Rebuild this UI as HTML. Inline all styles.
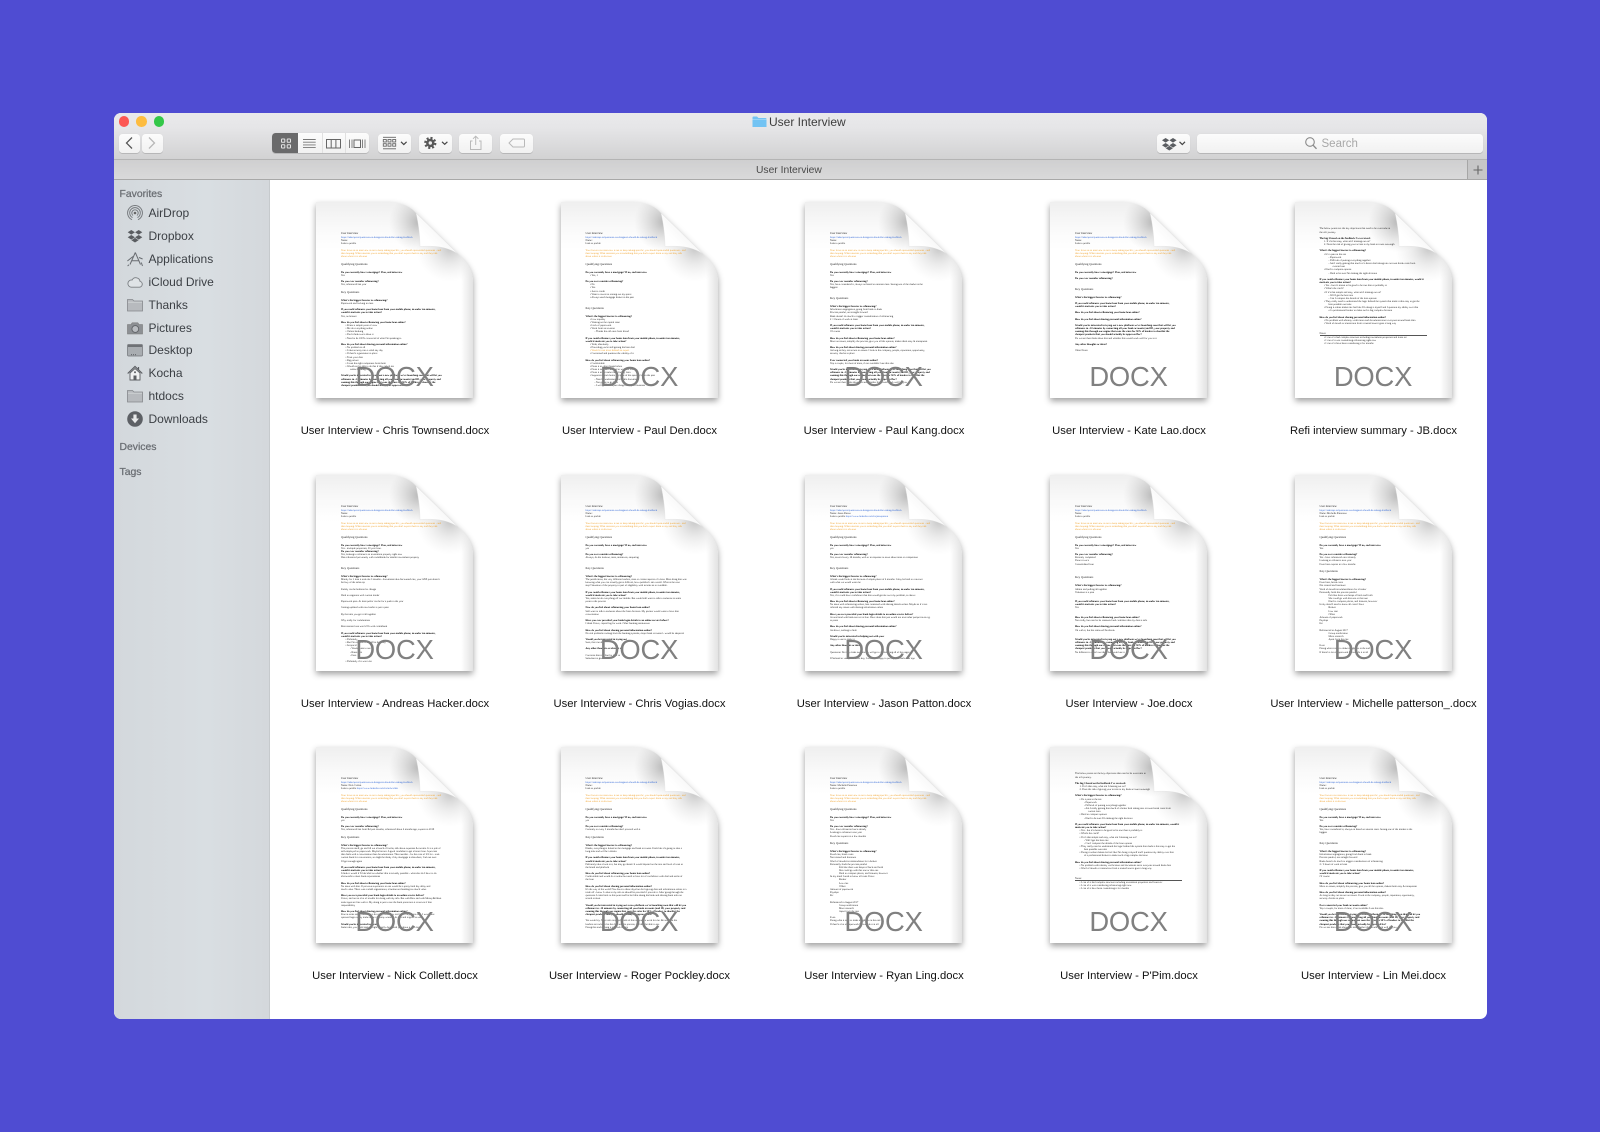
<!DOCTYPE html>
<html lang="en"><head><meta charset="utf-8"><title>User Interview</title>
<style>
html,body{margin:0;padding:0}
body{width:1600px;height:1132px;background:#4f4cd2;position:relative;overflow:hidden;font-family:"Liberation Sans",sans-serif}
#w{position:absolute;left:113.5px;top:113px;width:1373.5px;height:906px;border-radius:7px;overflow:hidden;background:#fff}
#c{position:absolute;left:-113.5px;top:-113px;width:1600px;height:1132px}
#c>*{position:absolute}
.tb{left:113px;top:113px;width:1375px;height:46px;background:linear-gradient(#e9e9eb,#e6e6e8 30%,#d2d2d3)}
.ln{left:113px;top:159px;width:1375px;height:1px;background:#b4b4b4}
.tab{left:113px;top:160px;width:1375px;height:19px;background:linear-gradient(#cfcfd0,#d9d9da)}
.ln2{left:113px;top:179px;width:1375px;height:1px;background:#a8a8a8}
.side{left:113px;top:180px;width:155.500px;height:840px;background:linear-gradient(90deg,#d3d8dc,#d9dee2 60%,#d4d8dc)}
.dot{width:10.6px;height:10.6px;border-radius:50%;top:116px}
.btn{background:linear-gradient(#fcfcfc,#f1f1f1);border-radius:3.5px;box-shadow:0 1px 0 rgba(0,0,0,.13),0 0 1px rgba(0,0,0,.08);height:19.5px;top:133.5px}
.ttl{font-size:12px;color:#3d3d3d;top:115px;left:769px;line-height:15px}
.tl{font-size:10.3px;color:#4a4a4a;top:164px;left:756px;line-height:14px}
.hd{font-size:10.4px;color:#6a6e73;-webkit-text-stroke:.25px #6a6e73;left:119.5px;line-height:12px}
.s{left:127px;height:16px;line-height:16px;font-size:12px;color:#3b3f44;padding-left:21.5px;white-space:nowrap;width:130px}
.s svg{position:absolute;left:0;top:0}
.f{width:157px;height:197px}
.f>*{position:absolute}
.p{left:0;top:0;overflow:visible}
.b{filter:drop-shadow(0 3px 3.2px rgba(0,0,0,.38))}
.t{left:25px;top:28.6px;font:2.6px/3.17px "Liberation Serif",serif;color:#1c1c1c;white-space:nowrap;text-rendering:geometricPrecision;width:112px}
.t>*{display:block;height:3.17px;margin:0;padding:0;font-size:2.6px;line-height:3.17px;text-decoration:none;font-style:normal;font-weight:normal}
.t b{font-weight:bold;color:#000}
.t h5{height:4.8px;margin-bottom:.7px;font-size:2.9px;line-height:4.8px}
.t h6{height:4.4px;margin:3.5px 0 4.5px;font-size:3.1px;line-height:4.4px}
.t a{color:#2f66d6}
.t i{color:#f0a32e}
.t li{list-style:none;padding-left:4.5px}
.t dd{padding-left:9px}
.t u{padding-left:13px}
.x{left:0;width:157px;text-align:center;top:157.5px;font:27.4px/34px "Liberation Sans",sans-serif;color:#808080;letter-spacing:-.2px}
.n{left:-40px;width:238px;text-align:center;top:222px;font-size:11.25px;line-height:14px;color:#111;white-space:nowrap}
</style></head><body>
<svg width="0" height="0" style="position:absolute">
<defs>
<linearGradient id="g1" x1="0" y1="0" x2="0" y2="1"><stop offset="0" stop-color="#efefef"/><stop offset=".12" stop-color="#f9f9f9"/><stop offset=".24" stop-color="#fff"/></linearGradient>
<radialGradient id="g2" gradientUnits="userSpaceOnUse" cx="103" cy="20" r="30"><stop offset="0" stop-color="#a8a8a8" stop-opacity=".8"/><stop offset="1" stop-color="#c8c8c8" stop-opacity="0"/></radialGradient>
<radialGradient id="g3" gradientUnits="userSpaceOnUse" cx="134" cy="46" r="34"><stop offset="0" stop-color="#a0a0a0" stop-opacity=".6"/><stop offset=".5" stop-color="#c0c0c0" stop-opacity=".3"/><stop offset="1" stop-color="#d8d8d8" stop-opacity="0"/></radialGradient>
<linearGradient id="g4" gradientUnits="userSpaceOnUse" x1="145" y1="0" x2="157" y2="0"><stop offset="0" stop-color="#e2e2e2" stop-opacity="0"/><stop offset="1" stop-color="#e2e2e2"/></linearGradient>
<linearGradient id="g5" gradientUnits="userSpaceOnUse" x1="110" y1="36" x2="125" y2="22"><stop offset="0" stop-color="#fff"/><stop offset=".6" stop-color="#f8f8f8"/><stop offset="1" stop-color="#cfcfcf"/></linearGradient>
<g id="pg">
<path d="M0 0H69C85 0 94 4 100 11L139 49C151 60 157 68 157 80V196H0Z" fill="url(#g1)"/>
<path d="M0 0H69C85 0 94 4 100 11L139 49C151 60 157 68 157 80V196H0Z" fill="url(#g2)"/>
<path d="M0 0H69C85 0 94 4 100 11L139 49C151 60 157 68 157 80V196H0Z" fill="url(#g3)"/>
<path d="M0 0H69C85 0 94 4 100 11L139 49C151 60 157 68 157 80V196H0Z" fill="url(#g4)"/>
</g>
<g id="fl">
<path d="M100 11C102.500 22 104 34 104 44.500C118 43.500 131 44.500 142 52L139 49Z" fill="url(#g5)" stroke="#dcdcdc" stroke-width=".3"/>
</g>
<g id="db"><path d="M3.800 .5L.2 2.800 3.800 5.100 7.400 2.800ZM11.200 .5L7.600 2.800 11.200 5.100 14.800 2.800ZM3.800 5.500L.2 7.800 3.800 10.100 7.400 7.800ZM11.200 5.500L7.600 7.800 11.200 10.100 14.800 7.800ZM7.500 8.400L3.900 10.700 7.500 13 11.100 10.700Z" fill="#5a5d61"/></g>
<g id="fd"><path d="M.5 2.500H5.500L7 4H15.500V14H.5Z" fill="#b7babe" stroke="#85888c" stroke-width=".8"/><path d="M1 5.200H15" stroke="#d2d5d8" stroke-width=".9"/></g>
</defs></svg>
<div id="w"><div id="c">
<div class="tb"></div><div class="ln"></div><div class="tab"></div><div class="ln2"></div>
<div style="left:1466.500px;top:160px;width:21px;height:19px;background:#c6c6c7;border-left:1px solid #a6a6a6;box-sizing:border-box"></div>
<svg style="left:1473px;top:165px" width="10" height="10"><path d="M5 .5V9.500M.5 5H9.500" stroke="#666" stroke-width="1.100"/></svg>
<div class="side"></div><div style="left:268.500px;top:180px;width:.8px;height:840px;background:#c6cacd"></div>
<div class="dot" style="left:118.500px;background:#fc5753"></div>
<div class="dot" style="left:136px;background:#fdbc40"></div>
<div class="dot" style="left:153.700px;background:#33c748"></div>
<svg style="left:752px;top:115.500px" width="15" height="12"><path d="M.5 1.500Q.5 .5 1.500 .5H5L6.500 2H13.500Q14.500 2 14.500 3V11H.5Z" fill="#72c3f3"/><path d="M.5 3.500H14.500" stroke="#a4daf8" stroke-width=".8"/></svg>
<div class="ttl">User Interview</div>
<div class="tl">User Interview</div>

<div class="btn" style="left:119px;width:21px"></div><div class="btn" style="left:142px;width:21px"></div>
<svg style="left:119px;top:133px" width="44" height="20"><path d="M13 4.500L7.500 10 13 15.500" fill="none" stroke="#555" stroke-width="1.300"/><path d="M30 4.500L35.500 10 30 15.500" fill="none" stroke="#b8b8b8" stroke-width="1.300"/></svg>

<div class="btn" style="left:272px;width:96.700px;height:20px;top:133px"></div>
<div style="left:272px;top:133px;width:26px;height:20px;background:#6a6a6b;border-radius:3.5px 0 0 3.5px"></div>
<div style="left:321.500px;top:133px;width:.8px;height:20px;background:#e0e0e0"></div>
<div style="left:345px;top:133px;width:.8px;height:20px;background:#e0e0e0"></div>
<svg style="left:272px;top:133px" width="97" height="20">
<g fill="none" stroke="#e4e4e4" stroke-width="1"><rect x="9.500" y="6" width="3.300" height="3.300" rx=".6"/><rect x="15.200" y="6" width="3.300" height="3.300" rx=".6"/><rect x="9.500" y="11.700" width="3.300" height="3.300" rx=".6"/><rect x="15.200" y="11.700" width="3.300" height="3.300" rx=".6"/></g>
<path d="M31 6.500H43.700M31 9.200H43.700M31 11.900H43.700M31 14.600H43.700" stroke="#777" stroke-width=".9"/>
<rect x="54.500" y="6.500" width="14" height="8.500" fill="none" stroke="#666" stroke-width="1"/><path d="M59.200 6.500V15M63.900 6.500V15" stroke="#666" stroke-width="1"/>
<path d="M77.500 6.500V15M80 6.500V15M90.500 6.500V15M93 6.500V15" stroke="#777" stroke-width=".9"/><rect x="82" y="7" width="6.500" height="7.500" fill="none" stroke="#666" stroke-width="1"/>
</svg>
<div class="btn" style="left:378px;width:33px"></div>
<svg style="left:378px;top:133px" width="33" height="20"><g fill="none" stroke="#666" stroke-width=".9"><path d="M5 4.300H18"/><rect x="5.300" y="6.500" width="3" height="2.500"/><rect x="10" y="6.500" width="3" height="2.500"/><rect x="14.700" y="6.500" width="3" height="2.500"/><rect x="5.300" y="10.700" width="3" height="2.500"/><rect x="10" y="10.700" width="3" height="2.500"/><rect x="14.700" y="10.700" width="3" height="2.500"/><path d="M5 15.800H18"/></g><path d="M23 8.800L25.800 11.500 28.600 8.800" fill="none" stroke="#444" stroke-width="1.200"/></svg>
<div class="btn" style="left:418.700px;width:33px"></div>
<svg style="left:418.700px;top:133px" width="33" height="20"><circle cx="11.300" cy="10" r="4.800" fill="none" stroke="#575757" stroke-width="2.600" stroke-dasharray="2 1.770"/><circle cx="11.300" cy="10" r="4.200" fill="#575757"/><circle cx="11.300" cy="10" r="1.700" fill="#eee"/><path d="M23 8.800L25.700 11.300 28.400 8.800" fill="none" stroke="#444" stroke-width="1.200"/></svg>
<div class="btn" style="left:459px;width:33px"></div>
<svg style="left:459px;top:133px" width="33" height="20"><g fill="none" stroke="#b9b9b9" stroke-width="1"><path d="M13.500 8H11.500V16.500H22V8H20"/><path d="M16.700 12V3.500M14 5.800L16.700 3.200 19.400 5.800"/></g></svg>
<div class="btn" style="left:499.700px;width:33px"></div>
<svg style="left:499.700px;top:133px" width="33" height="20"><path d="M13 6H23.500Q24.500 6 24.500 7V13Q24.500 14 23.500 14H13L9 10Z" fill="none" stroke="#b9b9b9" stroke-width="1"/></svg>
<div class="btn" style="left:1157px;width:32.700px"></div>
<svg style="left:1157px;top:133px" width="33" height="20"><use href="#db" x="4.800" y="4.500"/><path d="M22.500 8.800L25.300 11.500 28 8.800" fill="none" stroke="#444" stroke-width="1.200"/></svg>
<div class="btn" style="left:1197px;width:285.700px"></div>
<svg style="left:1304px;top:136px" width="14" height="15"><circle cx="6" cy="6" r="4.300" fill="none" stroke="#8a8a8a" stroke-width="1.100"/><path d="M9.200 9.300L12.500 12.800" stroke="#8a8a8a" stroke-width="1.400"/></svg>
<div style="left:1321.500px;top:137px;font-size:11.500px;line-height:15px;color:#a8a8a8">Search</div>

<div class="hd" style="top:189px">Favorites</div>
<div class="s" style="top:205px"><svg width="16" height="16" viewBox="0 0 16 16"><g fill="none" stroke="#74787c" stroke-width=".95"><path d="M5 14.700A7.400 7.400 0 1 1 11 14.700"/><path d="M5.500 12.600A5.300 5.300 0 1 1 10.500 12.600"/><path d="M6 10.500A3.200 3.200 0 1 1 10 10.500"/></g><circle cx="8" cy="8" r="1.300" fill="#666"/><path d="M8 9L5.800 14.800H10.200Z" fill="#d6dbdf"/></svg>AirDrop</div>
<div class="s" style="top:228px"><svg width="16" height="16" viewBox="0 0 16 16"><use href="#db" x=".5" y="1.500"/></svg>Dropbox</div>
<div class="s" style="top:251px"><svg width="16" height="16" viewBox="0 0 16 16"><g fill="none" stroke="#686c71" stroke-width="1"><path d="M8.300 1.500L13.500 13.500M8.300 1.500L3 13.500M4.700 9.700H11.800"/><path d="M.4 10L6 5.500M12 6.500L15.600 8M2 13.800L.6 15M14.300 11.500L15.500 15"/></g></svg>Applications</div>
<div class="s" style="top:273.500px"><svg width="16" height="16" viewBox="0 0 16 16"><path d="M4 13.200H12.500A3 3 0 0 0 13 7.300 4.200 4.200 0 0 0 5.100 6 3.600 3.600 0 0 0 4 13.200Z" fill="#dfe3e6" stroke="#7a7e82" stroke-width=".9"/></svg>iCloud Drive</div>
<div class="s" style="top:296.500px"><svg width="16" height="16" viewBox="0 0 16 16"><use href="#fd"/></svg>Thanks</div>
<div class="s" style="top:319.500px"><svg width="16" height="16" viewBox="0 0 16 16"><path d="M.5 4.500H4L5.200 2.800H10.800L12 4.500H15.500V14H.5Z" fill="#8d9094" stroke="#777" stroke-width=".6"/><circle cx="8.300" cy="9" r="3.400" fill="#b9bcc0" stroke="#5f6266" stroke-width=".9"/></svg>Pictures</div>
<div class="s" style="top:342px"><svg width="16" height="16" viewBox="0 0 16 16"><rect x=".5" y="2.500" width="15" height="11.500" rx="1" fill="#a9adb1" stroke="#707377" stroke-width=".7"/><rect x="1" y="3" width="14" height="2" fill="#6e7175"/><path d="M4 12.700H10" stroke="#55585c" stroke-dasharray="1 1" stroke-width=".9"/></svg>Desktop</div>
<div class="s" style="top:365px"><svg width="16" height="16" viewBox="0 0 16 16"><path d="M.7 8.500L8 1.500 15.300 8.500M11.500 2V5" fill="none" stroke="#5c5f63" stroke-width="1.200"/><path d="M3 8V15H13V8L8 3.500Z" fill="#f0f1f2" stroke="#5c5f63" stroke-width=".9"/><path d="M6.500 15V10.500H9.500V15Z" fill="#5c5f63"/><circle cx="8" cy="7.300" r="1" fill="#5c5f63"/></svg>Kocha</div>
<div class="s" style="top:388px"><svg width="16" height="16" viewBox="0 0 16 16"><use href="#fd"/></svg>htdocs</div>
<div class="s" style="top:411px"><svg width="16" height="16" viewBox="0 0 16 16"><circle cx="8" cy="8" r="7.800" fill="#5d6065"/><path d="M6.400 3.500H9.600V7.500H12L8 12.200 4 7.500H6.400Z" fill="#e8e9ea"/></svg>Downloads</div>
<div class="hd" style="top:441.500px">Devices</div>
<div class="hd" style="top:467px">Tags</div>

<!-- Row 1 -->
<div class="f" style="left:316px;top:202px"><svg class="p b" width="157" height="197" viewBox="0 0 157 197"><use href="#pg"/></svg><div class="t"><h5>User Interview</h5><a>https://asktraps.is/questions-on-designers-should-be-asking-feedback</a><p>Name:</p><p>Link to profile</p><s></s><i>Your focus in an interview is not to keep asking specific, you should open-ended questions - and</i><i>then looping. What interests you is something that you don't expect them to say and they talk</i><i>about where it is obvious</i><h6>Qualifying Questions</h6><b>Do you currently have a mortgage? If no, end interview</b><p>Yes</p><s></s><b>Do you ever consider refinancing?</b><p>Yes, refinanced last year</p><h6>Key Questions</h6><b>What's the biggest barrier to refinancing?</b><p>Paperwork and locking in rates</p><s></s><b>If you could refinance your home loan from your mobile phone, in under ten minutes,</b><b>would it motivate you to take action?</b><p>Yes, no brainer</p><s></s><b>How do you feel about refinancing your home loan online?</b><li>• Praise a simple point of view</li><li>• Me do everything online</li><li>• Online banking</li><li>• Don't think twice about it</li><li>• Need to be 100% convinced of what I'm speaking to</li><s></s><b>How do you feel about sharing personal information online?</b><li>• No problem at all</li><li>• I take security into a valid any day</li><li>• If there's a guarantee in place</li><li>• Trust your data</li><li>• Big picture</li><li>• I trust the right companies from them</li><li>• Would not be able to do this if they asked me</li><dd>online banking</dd><s></s><b>Would you be interested in trying out a new platform we're launching soon that will let you</b><b>refinance in ~10 minutes by connecting all your bank accounts (and ID, your property and</b><b>running this through our engine that runs the rates for 50% of lenders to shortlist the</b><b>cheapest products that you should actually be approved for?</b></div><svg class="p" width="157" height="197" viewBox="0 0 157 197"><use href="#fl"/></svg><em class="x" style="font-style:normal">DOCX</em><span class="n">User Interview - Chris Townsend.docx</span></div>

<div class="f" style="left:560.500px;top:202px"><svg class="p b" width="157" height="197" viewBox="0 0 157 197"><use href="#pg"/></svg><div class="t"><h5>User Interview</h5><a>https://asktraps.is/questions-on-designers-should-be-asking-feedback</a><p>Name:</p><p>Link to profile</p><s></s><i>Your focus in an interview is not to keep asking specific, you should open-ended questions - and</i><i>then looping. What interests you is something that you don't expect them to say and they talk</i><i>about where it is obvious</i><h6>Qualifying Questions</h6><b>Do you currently have a mortgage? If no, end interview</b><li>• Yes, 1</li><s></s><b>Do you ever consider refinancing?</b><li>• No</li><li>• Yes</li><li>• Just to credit</li><li>• Want to invest in renting out my space</li><li>• Always used mortgage broker in the past</li><s></s><h6>Key Questions</h6><b>What's the biggest barrier to refinancing?</b><li>• Low equality</li><li>• Waiting on the capital raise</li><li>• Lack of paperwork</li><li>• Work from an investor</li><dd>- Thinks the old ones from friend</dd><s></s><b>If you could refinance your home loan from your mobile phone, in under ten minutes,</b><b>would it motivate you to take action?</b><li>• Yeah, absolutely</li><li>• Providing you're still getting the best deal</li><li style="color:#f0a32e">• Would it cost more behind an expert</li><li>• Concerned and question the validity of it</li><s></s><b>How do you feel about refinancing your home loan online?</b><li>• Comfortable</li><li>• Done it in other things before</li><li>• Done it so what I'm used to with the rest</li><li>• Done it in the same thing for my loan</li><li>• Supports it from home, because of the speed of all in the past</li><dd>- Need to understand the bank's documents</dd><dd>- Not going to go back</dd><dd>- I will get to compare things from your business</dd></div><svg class="p" width="157" height="197" viewBox="0 0 157 197"><use href="#fl"/></svg><em class="x" style="font-style:normal">DOCX</em><span class="n">User Interview - Paul Den.docx</span></div>

<div class="f" style="left:805px;top:202px"><svg class="p b" width="157" height="197" viewBox="0 0 157 197"><use href="#pg"/></svg><div class="t"><h5>User Interview</h5><a>https://asktraps.is/questions-on-designers-should-be-asking-feedback</a><p>Name:</p><p>Link to profile</p><s></s><i>Your focus in an interview is not to keep asking specific, you should open-ended questions - and</i><i>then looping. What interests you is something that you don't expect them to say and they talk</i><i>about where it is obvious</i><h6>Qualifying Questions</h6><b>Do you currently have a mortgage? If no, end interview</b><p>Yes</p><s></s><b>Do you ever consider refinancing?</b><p>Yes, have considered it, always on based on interest rates. Seeing one of the market is the</p><p>biggest</p><s></s><h6>Key Questions</h6><b>What's the biggest barrier to refinancing?</b><p>Information segregation, going from bank to bank</p><p>Process painful, not straight forward</p><p>Bank doesn't do much to trigger consideration of refinancing</p><p>2 / 3 hours of work at least</p><s></s><b>If you could refinance your home loan from your mobile phone, in under ten minutes,</b><b>would it motivate you to take action?</b><p>Of course</p><s></s><b>How do you feel about refinancing your home loan online?</b><p>More no issues, simplify the process, give you all the options, makes them easy &amp; transparent</p><s></s><b>How do you feel about sharing personal information online?</b><p>As long as they are secure no issues. I look at the company, people, reputation, opportunity,</p><p>security checks in place</p><s></s><b>Ever connected your bank accounts online?</b><p>Yep a couple, for most of mine, if not available I use this also</p><s></s><b>Would you be interested in trying out a new platform we're launching soon that will let you</b><b>refinance in ~10 minutes by connecting all your bank accounts (and ID, your property and</b><b>running this through our engine that runs the rates for 50% of lenders to shortlist the</b><b>cheapest products that you should actually be approved for?</b><p>Do we see then think about this and whether this would work well for you</p></div><svg class="p" width="157" height="197" viewBox="0 0 157 197"><use href="#fl"/></svg><em class="x" style="font-style:normal">DOCX</em><span class="n">User Interview - Paul Kang.docx</span></div>

<div class="f" style="left:1050px;top:202px"><svg class="p b" width="157" height="197" viewBox="0 0 157 197"><use href="#pg"/></svg><div class="t"><h5>User Interview</h5><a>https://asktraps.is/questions-on-designers-should-be-asking-feedback</a><p>Name:</p><p>Link to profile</p><s></s><i>Your focus in an interview is not to keep asking specific, you should open-ended questions - and</i><i>then looping. What interests you is something that you don't expect them to say and they talk</i><i>about where it is obvious</i><h6>Qualifying Questions</h6><b>Do you currently have a mortgage? If no, end interview</b><s></s><b>Do you ever consider refinancing?</b><s></s><h6>Key Questions</h6><b>What's the biggest barrier to refinancing?</b><s></s><b>If you could refinance your home loan from your mobile phone, in under ten minutes,</b><b>would it motivate you to take action?</b><s></s><b>How do you feel about refinancing your home loan online?</b><s></s><b>How do you feel about sharing personal information online?</b><s></s><b>Would you be interested in trying out a new platform we're launching soon that will let you</b><b>refinance in ~10 minutes by connecting all your bank accounts (and ID, your property and</b><b>running this through our engine that runs the rates for 50% of lenders to shortlist the</b><b>cheapest products that you should actually be approved for?</b><p>Do we see then think about this and whether this would work well for you in it</p><s></s><b>Any other thoughts or ideas?</b><s></s><p>Other Notes</p></div><svg class="p" width="157" height="197" viewBox="0 0 157 197"><use href="#fl"/></svg><em class="x" style="font-style:normal">DOCX</em><span class="n">User Interview - Kate Lao.docx</span></div>

<div class="f" style="left:1294.500px;top:202px"><svg class="p b" width="157" height="197" viewBox="0 0 157 197"><use href="#pg"/></svg><div class="t" style="top:25.400px"><p>The below points are the key objections that need to be overcome in</p><p>the refi journey.</p><s></s><b>The big 3 based on the feedback I've received:</b><li>1. If it's that easy, what am I missing out on?</li><li>2. Does the risk of giving your access to my bank account outweigh</li><s></s><b>What's the biggest barrier to refinancing?</b><li>• It's a pain in the ass</li><dd>- Paperwork</dd><dd>- Difficult of putting everything together</dd><dd>- Am I really getting that much of a better deal taking into account break costs from</dd><u>current loan</u><li>• Hard to compare options</li><dd>- Hard to be sure I'm making the right decision</dd><s></s><b>If you could refinance your home loan from your mobile phone, in under ten minutes, would it</b><b>motivate you to take action?</b><li>• Yes - but it's meant to be good to be true than it probably is</li><li>• What's the catch?</li><li>• If it's that simple and easy, what am I missing out on?</li><dd>- Will I get the best rate</dd><dd>- Can I compare the details of the loan options</dd><li>• They really need to understand the logic behind the system that made it this easy to get the</li><dd>best possible outcome</dd><li>• Doing it online makes me feel like I'm doing it myself and I question my ability over that</li><dd>of a professional broker to make such a big complex decision</dd><s></s><b>How do you feel about sharing personal information online?</b><li>• No problem with identity verification and documents since everyone around bank data</li><li>• Word of mouth or transaction from a trusted source goes a long way</li><s></s><s></s><p style="border-bottom:.4px solid #555;width:107px">Notes:</p><li>• I can of it had complex structure including investment properties and loans etc</li><li>• I can of it was considering refinancing right now</li><li>• I can of it have been considering it for months</li></div><svg class="p" width="157" height="197" viewBox="0 0 157 197"><use href="#fl"/></svg><em class="x" style="font-style:normal">DOCX</em><span class="n">Refi interview summary - JB.docx</span></div>

<!-- Row 2 -->
<div class="f" style="left:316px;top:475px"><svg class="p b" width="157" height="197" viewBox="0 0 157 197"><use href="#pg"/></svg><div class="t"><h5>User Interview</h5><a>https://asktraps.is/questions-on-designers-should-be-asking-feedback</a><p>Name:</p><p>Link to profile</p><s></s><i>Your focus in an interview is not to keep asking specific, you should open-ended questions - and</i><i>then looping. What interests you is something that you don't expect them to say and they talk</i><i>about where it is obvious</i><h6>Qualifying Questions</h6><b>Do you currently have a mortgage? If no, end interview</b><p>Yes - multiple properties, 30 year loan.</p><b>Do you ever consider refinancing?</b><p>Yes, looking to refinance an investment property right now</p><p>Has refinanced previously with commbank for smaller investment property</p><s></s><h6>Key Questions</h6><b>What's the biggest barrier to refinancing?</b><p>Mainly for 1 loan it took me 3 months - documents take discounted rate, your ANZ just doesn't</p><p>bit lazy of the sales rep</p><s></s><p>Family can be bothered to change</p><s></s><p>Hard to negotiate with current lender</p><s></s><p>Paperwork pain. At least prefer can be for a push in the year</p><s></s><p>Getting updated with new lender is just a pain</p><s></s><p>By the time you get it all together</p><s></s><p>Why really for commitment</p><s></s><p>Best interest loan was 6.5% with commbank</p><s></s><b>If you could refinance your home loan from your mobile phone, in under ten minutes,</b><b>would it motivate you to take action?</b><li>• Definitely</li><li>• But I'm not sure it would be that easy</li><li>• Sceptical</li><dd>- Would want to see</dd><dd>- Rates first</dd><dd>- Fees</dd><s></s><li>• Definitely if it was a lot</li></div><svg class="p" width="157" height="197" viewBox="0 0 157 197"><use href="#fl"/></svg><em class="x" style="font-style:normal">DOCX</em><span class="n">User Interview - Andreas Hacker.docx</span></div>

<div class="f" style="left:560.500px;top:475px"><svg class="p b" width="157" height="197" viewBox="0 0 157 197"><use href="#pg"/></svg><div class="t"><h5>User Interview</h5><a>https://asktraps.is/questions-on-designers-should-be-asking-feedback</a><p>Name:</p><p>Link to profile</p><s></s><i>Your focus in an interview is not to keep asking specific, you should open-ended questions - and</i><i>then looping. What interests you is something that you don't expect them to say and they talk</i><i>about where it is obvious</i><h6>Qualifying Questions</h6><b>Do you currently have a mortgage? If no, end interview</b><p>yes</p><s></s><b>Do you ever consider refinancing?</b><p>Always, do the lookout, rates, initiatives, enquiring</p><s></s><h6>Key Questions</h6><b>What's the biggest barrier to refinancing?</b><p>The justification, the very different lenders, rates or certain aspects of a loan. Main thing that was</p><p>knowing what you can actually get is difficult, how qualified i am overall. What is the next</p><p>step? Situation of the property in part of eligibility with income as to available.</p><s></s><b>If you could refinance your home loan from your mobile phone, in under ten minutes,</b><b>would it motivate you to take action?</b><p>Yes, same me do everything off our mobile. But would still want to talk to someone at some</p><p>point in the process</p><s></s><b>Now do you feel about refinancing your home loan online?</b><p>Still want to talk to someone about the finer decision. My partner would want to have that</p><p>conversation</p><s></s><b>Have you ever provided your bank login details to an online service before?</b><p>I think I have, capital log for work. Other banking institutions</p><s></s><b>How do you feel about sharing personal information online?</b><p>No real problems coming from the banking systems, major bank is trusted - would be skeptical</p><s></s><b>Would you be interested in trying out</b><p>Sure, that can do</p><s></s><b>Any other thoughts or ideas at all</b><s></s><p>Concerns that it is hard to lock in</p><p>Simulator is good</p></div><svg class="p" width="157" height="197" viewBox="0 0 157 197"><use href="#fl"/></svg><em class="x" style="font-style:normal">DOCX</em><span class="n">User Interview - Chris Vogias.docx</span></div>

<div class="f" style="left:805px;top:475px"><svg class="p b" width="157" height="197" viewBox="0 0 157 197"><use href="#pg"/></svg><div class="t"><h5>User Interview</h5><a>https://asktraps.is/questions-on-designers-should-be-asking-feedback</a><p>Name: Jason Patton</p><p>Link to profile <span style="color:#2f66d6">https://www.linkedin.com/in/jasonpatton</span></p><s></s><i>Your focus in an interview is not to keep asking specific, you should open-ended questions - and</i><i>then looping. What interests you is something that you don't expect them to say and they talk</i><i>about where it is obvious</i><h6>Qualifying Questions</h6><b>Do you currently have a mortgage? If no, end interview</b><p>yes</p><s></s><b>Do you ever consider refinancing?</b><p>Yes, several every 18 months, with or in response to news about rates or competition</p><s></s><h6>Key Questions</h6><b>What's the biggest barrier to refinancing?</b><p>A bank would look at me because of employment of 6 months. I may be hard to convince</p><p>with what we would want me</p><s></s><b>If you could refinance your home loan from your mobile phone, in under ten minutes,</b><b>would it motivate you to take action?</b><p>Yes, if it could have confidence that this would get me over my problem, so above</p><s></s><b>How do you feel about refinancing your home loan online?</b><p>No issue with refinancing online, less contained with sharing details online. Maybe as if it are</p><p>referred any issues with sharing information online</p><s></s><b>Have you ever provided your bank login details to an online service before?</b><p>At one hand with bank service is fine. Have done that just would not trust other perspectives e.g.</p><p>to posts</p><s></s><b>How do you feel about sharing personal information online?</b><p>As above, nothing to hide</p><s></s><b>Would you be interested in helping out with your</b><p>Happy to use to make it</p><s></s><b>Any other thoughts or ideas</b><s></s><p>Questions: Do they make sure money will go to a solid thing all of the pages</p><s></s><p>I Demand to verify it is more key, I would be happy to put my data back after app</p></div><svg class="p" width="157" height="197" viewBox="0 0 157 197"><use href="#fl"/></svg><em class="x" style="font-style:normal">DOCX</em><span class="n">User Interview - Jason Patton.docx</span></div>

<div class="f" style="left:1050px;top:475px"><svg class="p b" width="157" height="197" viewBox="0 0 157 197"><use href="#pg"/></svg><div class="t"><h5>User Interview</h5><a>https://asktraps.is/questions-on-designers-should-be-asking-feedback</a><p>Name:</p><p>Link to profile</p><s></s><i>Your focus in an interview is not to keep asking specific, you should open-ended questions - and</i><i>then looping. What interests you is something that you don't expect them to say and they talk</i><i>about where it is obvious</i><h6>Qualifying Questions</h6><b>Do you currently have a mortgage? If no, end interview</b><p>Yes</p><s></s><b>Do you ever consider refinancing?</b><p>Recently completed</p><p>Done it twice</p><p>Consolidated loan</p><s></s><s></s><h6>Key Questions</h6><b>What's the biggest barrier to refinancing?</b><p>Admin and pulling all together</p><p>Valuation is a pain</p><s></s><s></s><b>If you could refinance your home loan from your mobile phone, in under ten minutes,</b><b>would it motivate you to take action?</b><p>Yes</p><s></s><s></s><b>How do you feel about refinancing your home loan online?</b><p>Not really, but need to be reassured and confident that my data is safe</p><s></s><b>How do you feel about sharing personal information online?</b><p>Ok with it, but has removed Facebook</p><s></s><s></s><b>Would you be interested in trying out a new platform we're launching soon that will let you</b><b>refinance in ~10 minutes by connecting all your bank accounts (and ID, your property and</b><b>running this through our engine that runs the rates for 50% of lenders to shortlist the</b><b>cheapest products that you should actually be approved for?</b><p>No different to what's out there but would use it</p></div><svg class="p" width="157" height="197" viewBox="0 0 157 197"><use href="#fl"/></svg><em class="x" style="font-style:normal">DOCX</em><span class="n">User Interview - Joe.docx</span></div>

<div class="f" style="left:1294.500px;top:475px"><svg class="p b" width="157" height="197" viewBox="0 0 157 197"><use href="#pg"/></svg><div class="t"><h5>User Interview</h5><a>https://asktraps.is/questions-on-designers-should-be-asking-feedback</a><p>Name: Michelle Patterson</p><p>Link to profile</p><s></s><i>Your focus in an interview is not to keep asking specific, you should open-ended questions - and</i><i>then looping. What interests you is something that you don't expect them to say and they talk</i><i>about where it is obvious</i><h6>Qualifying Questions</h6><b>Do you currently have a mortgage? If no, end interview</b><p>Yes</p><s></s><b>Do you ever consider refinancing?</b><p>Yes - have refinanced once already</p><p>Looking to refinance next year</p><p>Fixed rate expires in a few months</p><h6>Key Questions</h6><b>What's the biggest barrier to refinancing?</b><p>Fixed rate, break costs</p><p>Not trained and literature</p><p>Word of mouth/recommendation for a broker</p><p>Personally finds the process painful</p><dd>Felt like there was heaps of back and forth</dd><dd>She could go with this one or that one</dd><dd>Hard to compare places, and features, however</dd><p>In my mind I need to know all costs I have</p><dd>Broker</dd><dd>Low rate</dd><dd>Offset</dd><p>Amount of paperwork</p><p>Payslips</p><p>Etc</p><s></s><p>Refinanced in August 2017</p><dd>Group notification</dd><dd>More research</dd><dd>Apart from the rate</dd><s></s><p>Even</p><p>Doing what it says to make it right, so at the end</p><p>If there's a lot of paperwork I would do it at all</p></div><svg class="p" width="157" height="197" viewBox="0 0 157 197"><use href="#fl"/></svg><em class="x" style="font-style:normal">DOCX</em><span class="n">User Interview - Michelle patterson_.docx</span></div>

<!-- Row 3 -->
<div class="f" style="left:316px;top:747px"><svg class="p b" width="157" height="197" viewBox="0 0 157 197"><use href="#pg"/></svg><div class="t"><h5>User Interview</h5><a>https://asktraps.is/questions-on-designers-should-be-asking-feedback</a><p>Name: Nick Collett</p><p>Link to profile <span style="color:#2f66d6">https://www.linkedin.com/in/nickcollett</span></p><s></s><i>Your focus in an interview is not to keep asking specific, you should open-ended questions - and</i><i>then looping. What interests you is something that you don't expect them to say and they talk</i><i>about where it is obvious</i><h6>Qualifying Questions</h6><b>Do you currently have a mortgage? If no, end interview</b><p>yes</p><s></s><b>Do you ever consider refinancing?</b><p>Yes, refinanced last from Rd part months, refinanced about 6 months ago, expires in 2019</p><h6>Key Questions</h6><b>What's the biggest barrier to refinancing?</b><p>The process itself, go and fill out a bunch of forms, talk about expenses &amp; income. It is a pile of</p><p>self-employed so paperwork. Maybe barrier. A good candidate to get a better loan. A process</p><p>that deals with a conversation than documentation. Then another - fix the cons of 2.9 for - took</p><p>current bank for convenience, so might be shaky if my mortgage is elsewhere, I am not sure</p><p>I'd get enough again</p><s></s><b>If you could refinance your home loan from your mobile phone, in under ten minutes,</b><b>would it motivate you to take action?</b><p>I think it would if I'd decided on whether that is actually possible - what else do I have to do</p><p>afterwards to meet bank requirements</p><s></s><b>How do you feel about refinancing your home loan online?</b><p>No issue with that. If previous experience at one would be a pretty hard day delay and</p><p>much value. There was a small organisation, a human not handing too much value</p><s></s><b>Have you ever provided your bank login details to an online service before?</b><p>I have, and not in a lot of trouble for doing with my info. But with Raiz and with MoneyBrilliant</p><p>some apps are fine with it. My doing is just to see the bank protection it is secure if that</p><p>responsibility</p><s></s><b>How do you feel about sharing personal information online?</b><p>Fine at some stage; banks are a bit risky, think they are fine if they share data. I would use</p><p>optional login or my name if the company wants to do this and is good to use</p><s></s><b>Would you be interested in trying</b><p>Same idea, you could make it right. I really don't need you about it all I made</p></div><svg class="p" width="157" height="197" viewBox="0 0 157 197"><use href="#fl"/></svg><em class="x" style="font-style:normal">DOCX</em><span class="n">User Interview - Nick Collett.docx</span></div>

<div class="f" style="left:560.500px;top:747px"><svg class="p b" width="157" height="197" viewBox="0 0 157 197"><use href="#pg"/></svg><div class="t"><h5>User Interview</h5><a>https://asktraps.is/questions-on-designers-should-be-asking-feedback</a><p>Name:</p><p>Link to profile</p><s></s><i>Your focus in an interview is not to keep asking specific, you should open-ended questions - and</i><i>then looping. What interests you is something that you don't expect them to say and they talk</i><i>about where it is obvious</i><h6>Qualifying Questions</h6><b>Do you currently have a mortgage? If no, end interview</b><p>yes</p><s></s><b>Do you ever consider refinancing?</b><p>Certainly to every 3 months but don't proceed with it</p><h6>Key Questions</h6><b>What's the biggest barrier to refinancing?</b><p>Hassle, everything is linked to the mortgage and bank accounts. Feels like it's going to take a</p><p>long time and will be a drama</p><s></s><b>If you could refinance your home loan from your mobile phone, in under ten minutes,</b><b>would it motivate you to take action?</b><p>Definitely take a look at it, but may go ahead. It would depend on the rate and level of trust in</p><p>the brand and platform</p><s></s><b>How do you feel about refinancing your home loan online?</b><p>Comfortable and would do it online but need to have lot of confidence with deal and terms of</p><p>the loan</p><s></s><b>How do you feel about sharing personal information online?</b><p>It's the way of the world! You have to these days but don't giving data and information online is a</p><p>trade off - know I value in my info as should be provided if provide it. After going through the</p><p>questions I came back to this point and he feel that taking the bank and sharing bank info not</p><p>scared at most</p><s></s><b>Would you be interested in trying out a new platform we're launching soon that will let you</b><b>refinance in ~10 minutes by connecting all your bank accounts (and ID, your property and</b><b>running this through our engine that runs the rates for 50% of lenders to shortlist the</b><b>cheapest products that you should actually be approved for?</b><s></s><p>Yes would try. More info required needs of this is going to work for me. Be sure that the</p><p>lenders are included in the data and the process, and then be able to see</p><p>Doing this and making it all work for me</p></div><svg class="p" width="157" height="197" viewBox="0 0 157 197"><use href="#fl"/></svg><em class="x" style="font-style:normal">DOCX</em><span class="n">User Interview - Roger Pockley.docx</span></div>

<div class="f" style="left:805px;top:747px"><svg class="p b" width="157" height="197" viewBox="0 0 157 197"><use href="#pg"/></svg><div class="t"><h5>User Interview</h5><a>https://asktraps.is/questions-on-designers-should-be-asking-feedback</a><p>Name: Michelle Patterson</p><p>Link to profile</p><s></s><i>Your focus in an interview is not to keep asking specific, you should open-ended questions - and</i><i>then looping. What interests you is something that you don't expect them to say and they talk</i><i>about where it is obvious</i><h6>Qualifying Questions</h6><b>Do you currently have a mortgage? If no, end interview</b><p>Yes</p><s></s><b>Do you ever consider refinancing?</b><p>Yes - have refinanced once already</p><p>Looking to refinance next year</p><p>Fixed rate expires in a few months</p><h6>Key Questions</h6><b>What's the biggest barrier to refinancing?</b><p>Fixed rate, break costs</p><p>Not trained and literature</p><p>Word of mouth/recommendation for a broker</p><p>Personally finds the process painful</p><dd>Felt like there was heaps of back and forth</dd><dd>She could go with this one or that one</dd><dd>Hard to compare places, and features, however</dd><p>In my mind I need to know all costs I have</p><dd>Broker</dd><dd>Low rate</dd><dd>Offset</dd><p>Amount of paperwork</p><p>Payslips</p><p>Etc</p><s></s><p>Refinanced in August 2017</p><dd>Group notification</dd><dd>More research</dd><dd>Apart from the rate</dd><s></s><p>Even</p><p>Doing what it says to make it right, so at the end</p><p>If there's a lot of paperwork I would do it at all</p></div><svg class="p" width="157" height="197" viewBox="0 0 157 197"><use href="#fl"/></svg><em class="x" style="font-style:normal">DOCX</em><span class="n">User Interview - Ryan Ling.docx</span></div>

<div class="f" style="left:1050px;top:747px"><svg class="p b" width="157" height="197" viewBox="0 0 157 197"><use href="#pg"/></svg><div class="t" style="top:25.400px"><p>The below points are the key objections that need to be overcome in</p><p>the refi journey.</p><s></s><b>The big 3 based on the feedback I've received:</b><li>1. If it's that easy, what am I missing out on?</li><li>2. Does the risk of giving your access to my bank account outweigh</li><s></s><b>What's the biggest barrier to refinancing?</b><li>• It's a pain in the ass</li><dd>- Paperwork</dd><dd>- Difficult of putting everything together</dd><dd>- Am I really getting that much of a better deal taking into account break costs from</dd><u>current loan</u><li>• Hard to compare options</li><dd>- Hard to be sure I'm making the right decision</dd><s></s><b>If you could refinance your home loan from your mobile phone, in under ten minutes, would it</b><b>motivate you to take action?</b><li>• Yes - but it's meant to be good to be true than it probably is</li><li>• What's the catch?</li><li>• If it's that simple and easy, what am I missing out on?</li><dd>- Will I get the best rate</dd><dd>- Can I compare the details of the loan options</dd><li>• They really need to understand the logic behind the system that made it this easy to get the</li><dd>best possible outcome</dd><li>• Doing it online makes me feel like I'm doing it myself and I question my ability over that</li><dd>of a professional broker to make such a big complex decision</dd><s></s><b>How do you feel about sharing personal information online?</b><li>• No problem with identity verification and documents since everyone around bank data</li><li>• Word of mouth or transaction from a trusted source goes a long way</li><s></s><s></s><p style="border-bottom:.4px solid #555;width:107px">Notes:</p><li>• I can of it had complex structure including investment properties and loans etc</li><li>• I can of it was considering refinancing right now</li><li>• I can of it have been considering it for months</li></div><svg class="p" width="157" height="197" viewBox="0 0 157 197"><use href="#fl"/></svg><em class="x" style="font-style:normal">DOCX</em><span class="n">User Interview - P'Pim.docx</span></div>

<div class="f" style="left:1294.500px;top:747px"><svg class="p b" width="157" height="197" viewBox="0 0 157 197"><use href="#pg"/></svg><div class="t"><h5>User Interview</h5><a>https://asktraps.is/questions-on-designers-should-be-asking-feedback</a><p>Name:</p><p>Link to profile</p><s></s><i>Your focus in an interview is not to keep asking specific, you should open-ended questions - and</i><i>then looping. What interests you is something that you don't expect them to say and they talk</i><i>about where it is obvious</i><h6>Qualifying Questions</h6><b>Do you currently have a mortgage? If no, end interview</b><p>Yes</p><s></s><b>Do you ever consider refinancing?</b><p>Yes, have considered it, always on based on interest rates. Seeing one of the market is the</p><p>biggest</p><s></s><h6>Key Questions</h6><b>What's the biggest barrier to refinancing?</b><p>Information segregation, going from bank to bank</p><p>Process painful, not straight forward</p><p>Bank doesn't do much to trigger consideration of refinancing</p><p>2 / 3 hours of work at least</p><s></s><b>If you could refinance your home loan from your mobile phone, in under ten minutes,</b><b>would it motivate you to take action?</b><p>Of course</p><s></s><b>How do you feel about refinancing your home loan online?</b><p>More no issues, simplify the process, give you all the options, makes them easy &amp; transparent</p><s></s><b>How do you feel about sharing personal information online?</b><p>As long as they are secure no issues. I look at the company, people, reputation, opportunity,</p><p>security checks in place</p><s></s><b>Ever connected your bank accounts online?</b><p>Yep a couple, for most of mine, if not available I use this also</p><s></s><b>Would you be interested in trying out a new platform we're launching soon that will let you</b><b>refinance in ~10 minutes by connecting all your bank accounts (and ID, your property and</b><b>running this through our engine that runs the rates for 50% of lenders to shortlist the</b><b>cheapest products that you should actually be approved for?</b><p>Do we see then think about this and whether this would work well for you</p></div><svg class="p" width="157" height="197" viewBox="0 0 157 197"><use href="#fl"/></svg><em class="x" style="font-style:normal">DOCX</em><span class="n">User Interview - Lin Mei.docx</span></div>
</div></div>
</body></html>
